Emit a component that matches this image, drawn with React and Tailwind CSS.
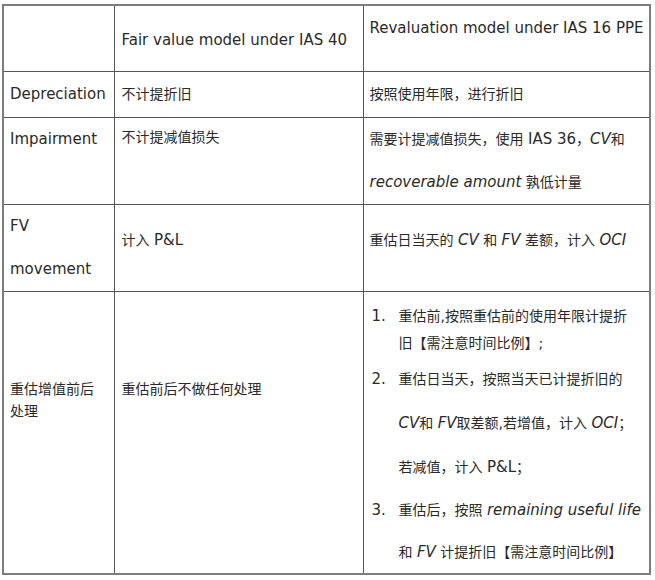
import React from "react";

const FONT = { fontFamily: '"DejaVu Sans", "Noto Sans CJK SC", sans-serif' };

// latin words are a touch wider in the original handwriting font
function L({ children, i }) {
  return <span className={`text-[15px] ${i ? "italic" : ""}`}>{children}</span>;
}

function Num({ n, children, lead }) {
  return (
    <div className={`grid grid-cols-[27px_1fr] ${lead}`}>
      <L>{n}.</L>
      <div className="whitespace-nowrap">{children}</div>
    </div>
  );
}

export default function App() {
  return (
    <div
      className="w-[655px] h-[580px] bg-white pt-[4px] pl-[2px] text-[14px] text-[#2a2a2a]"
      style={FONT}
    >
      <table className="table-fixed border-collapse border-2 border-[#7d7d7d] w-[647px]">
        <colgroup>
          <col className="w-[111px]" />
          <col className="w-[249px]" />
          <col className="w-[287px]" />
        </colgroup>
        <tbody>
          {/* header */}
          <tr className="h-[66px]">
            <td className="border border-[#555]" />
            <td className="border border-[#555] align-middle px-[7px] pt-[3px] leading-[22px] whitespace-nowrap">
              <L>Fair value model under IAS 40</L>
            </td>
            <td className="border border-[#555] align-top px-[6px] pt-[11px] leading-[22px] whitespace-nowrap">
              <L>Revaluation model under IAS 16 PPE</L>
            </td>
          </tr>

          <tr className="h-[46px]">
            <td className="border border-[#555] align-middle px-[6px] leading-[43px] whitespace-nowrap">
              <L>Depreciation</L>
            </td>
            <td className="border border-[#555] align-middle px-[7px] leading-[43px]">不计提折旧</td>
            <td className="border border-[#555] align-middle px-[6px] leading-[43px]">按照使用年限，进行折旧</td>
          </tr>

          <tr className="h-[87px]">
            <td className="border border-[#555] align-top px-[6px] leading-[43px]">
              <L>Impairment</L>
            </td>
            <td className="border border-[#555] align-top px-[7px] leading-[38px]">不计提减值损失</td>
            <td className="border border-[#555] align-top px-[6px] leading-[43px] whitespace-nowrap">
              需要计提减值损失，使用 <L>IAS 36</L>，<L i>CV</L>和
              <br />
              <L i>recoverable amount</L> 孰低计量
            </td>
          </tr>

          <tr className="h-[87px]">
            <td className="border border-[#555] align-top px-[6px] leading-[43px]">
              <L>FV</L>
              <br />
              <L>movement</L>
            </td>
            <td className="border border-[#555] align-top px-[7px] pt-[24px] leading-[22px]">
              计入 <L>P&amp;L</L>
            </td>
            <td className="border border-[#555] align-top px-[6px] pt-[24px] leading-[22px] whitespace-nowrap">
              重估日当天的 <L i>CV</L> 和 <L i>FV</L> 差额，计入 <L i>OCI</L>
            </td>
          </tr>

          <tr className="h-[283px]">
            <td className="border border-[#555] align-top px-[6px] pt-[86px] leading-[22px] whitespace-nowrap">
              重估增值前后
              <br />
              处理
            </td>
            <td className="border border-[#555] align-top px-[7px] pt-[86px] leading-[22px]">重估前后不做任何处理</td>
            <td className="border border-[#555] align-top pl-[8px] pr-[4px] pt-[11px]">
              <Num n={1} lead="leading-[27px]">
                重估前,按照重估前的使用年限计提折
                <br />
                旧【需注意时间比例】;
              </Num>
              <Num n={2} lead="leading-[44px]">
                重估日当天，按照当天已计提折旧的
                <br />
                <L i>CV</L>和 <L i>FV</L>取差额,若增值，计入 <L i>OCI</L>；
                <br />
                若减值，计入 <L>P&amp;L</L>；
              </Num>
              <Num n={3} lead="leading-[42px]">
                重估后，按照 <L i>remaining useful life</L>
                <br />
                和 <L i>FV</L> 计提折旧【需注意时间比例】
              </Num>
            </td>
          </tr>
        </tbody>
      </table>
    </div>
  );
}
